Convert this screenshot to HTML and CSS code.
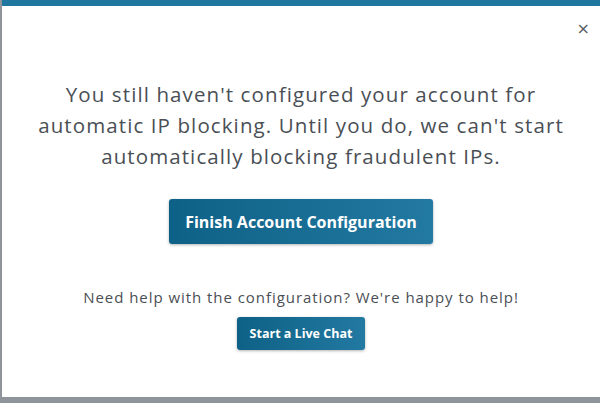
FILE: index.html
```html
<!DOCTYPE html>
<html lang="en">
<head>
<meta charset="utf-8">
<link rel="stylesheet" href="styles.css">
</head>
<body>
<div class="modal">
  <button class="close" aria-label="Close">&times;</button>
  <p class="lead">You still haven't configured your account for automatic IP blocking. Until you do, we can't start automatically blocking fraudulent IPs.</p>
  <button class="btn btn-lg">Finish Account Configuration</button>
  <p class="help">Need help with the configuration? We're happy to help!</p>
  <button class="btn btn-sm">Start a Live Chat</button>
</div>
</body>
</html>
```
FILE: styles.css
```css
html, body {
  margin: 0;
  padding: 0;
  height: 403px;
  overflow: hidden;
  background: #8f949a;
}
.modal {
  position: relative;
  box-sizing: border-box;
  margin-left: 2px;
  height: 397px;
  background: #fff;
  border-top: 6px solid #1f769e;
  display: flex;
  flex-direction: column;
  align-items: center;
  font-family: "Open Sans", Lato, sans-serif;
  color: #4a4f55;
  text-align: center;
}
.close {
  position: absolute;
  top: 15px;
  right: 10px;
  border: 0;
  background: none;
  color: #5a5f66;
  font-size: 16px;
  line-height: 16px;
  padding: 0;
  font-family: "DejaVu Sans", sans-serif;
}
.lead {
  margin: 73px 0 0;
  width: 560px;
  font-size: 20.5px;
  letter-spacing: 1.1px;
  line-height: 31px;
}
.btn {
  border: 0;
  color: #fff;
  font-family: "Open Sans", Lato, sans-serif;
  font-weight: 700;
  border-radius: 3px;
  background: linear-gradient(90deg, #0e6186, #2279a1);
  box-shadow: 0 1px 3px rgba(0,0,0,0.3);
}
.btn-lg {
  margin-top: 27px;
  width: 264px;
  height: 45px;
  font-size: 16px;
}
.help {
  margin: 43px 0 0;
  font-size: 15px;
  letter-spacing: 0.95px;
  line-height: 20px;
}
.btn-sm {
  margin-top: 10px;
  width: 128px;
  height: 33px;
  font-size: 12.5px;
}
```
